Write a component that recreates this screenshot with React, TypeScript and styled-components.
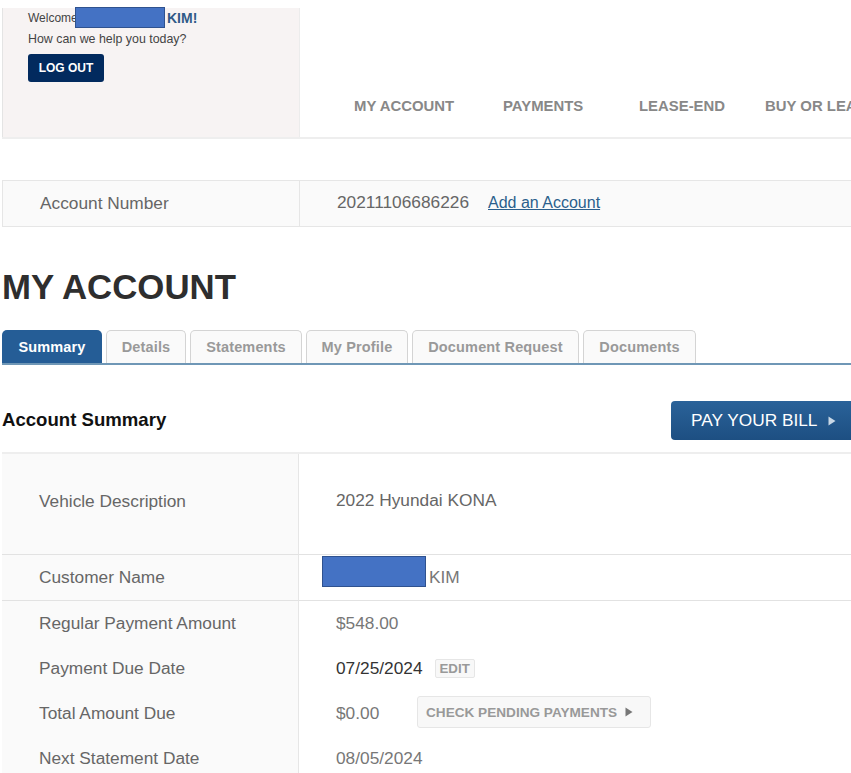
import { createGlobalStyle, styled } from 'styled-components';

const GlobalStyle = createGlobalStyle`
  html, body {
    margin: 0;
    padding: 0;
    background: #fff;
    overflow: hidden;
  }
  body {
    font-family: "Liberation Sans", Arial, sans-serif;
  }
`;

const navItems = [
  { label: 'MY ACCOUNT', width: 149 },
  { label: 'PAYMENTS', width: 136 },
  { label: 'LEASE-END', width: 126 },
  { label: 'BUY OR LEASE', width: 120 },
];

const tabs = [
  { label: 'Summary', width: 100, active: true },
  { label: 'Details', width: 80 },
  { label: 'Statements', width: 112 },
  { label: 'My Profile', width: 102 },
  { label: 'Document Request', width: 167 },
  { label: 'Documents', width: 113 },
];

const App = () => {
  return (
    <Page>
      <GlobalStyle />
      <Header>
        <WelcomePanel>
          <WelcomeLine>
            Welcome <Redaction $w={90} $h={21} $x={47} $y={-4} /> <Name>KIM!</Name>
          </WelcomeLine>
          <HelpLine>How can we help you today?</HelpLine>
          <LogOut>LOG OUT</LogOut>
        </WelcomePanel>
        <Nav>
          {navItems.map((item) => (
            <NavItem key={item.label} style={{ width: item.width }}>
              {item.label}
            </NavItem>
          ))}
        </Nav>
      </Header>

      <AccountBar>
        <AccountLabel>Account Number</AccountLabel>
        <AccountValue>
          20211106686226
          <AddLink href="#">Add an Account</AddLink>
        </AccountValue>
      </AccountBar>

      <Heading>MY ACCOUNT</Heading>

      <TabBar>
        {tabs.map((tab) => (
          <Tab key={tab.label} $active={tab.active} style={{ width: tab.width }}>
            {tab.label}
          </Tab>
        ))}
      </TabBar>

      <SummaryHead>
        <SummaryTitle>Account Summary</SummaryTitle>
        <PayButton>
          PAY YOUR BILL
          <Arrow width="8" height="10" viewBox="0 0 8 10">
            <path d="M0.5 0.5 L7.5 5 L0.5 9.5 Z" fill="#c9d8e6" />
          </Arrow>
        </PayButton>
      </SummaryHead>

      <Table>
        <LabelCell $h={101} $line>
          <VehicleLabel>Vehicle Description</VehicleLabel>
        </LabelCell>
        <ValueCell $h={101} $line>
          <VehicleText>2022 Hyundai KONA</VehicleText>
        </ValueCell>

        <LabelCell $h={46} $line>
          Customer Name
        </LabelCell>
        <ValueCell $h={46} $line>
          <Redaction $w={104} $h={31} $x={23} $y={1} />
          <CustomerText>KIM</CustomerText>
        </ValueCell>

        <LabelCell $h={45}>Regular Payment Amount</LabelCell>
        <ValueCell $h={45}>$548.00</ValueCell>

        <LabelCell $h={45}>Payment Due Date</LabelCell>
        <ValueCell $h={45}>
          <DueDate>07/25/2024</DueDate>
          <EditButton>EDIT</EditButton>
        </ValueCell>

        <LabelCell $h={45}>Total Amount Due</LabelCell>
        <ValueCell $h={45}>
          <TotalAmount>$0.00</TotalAmount>
          <PendingButton>
            CHECK PENDING PAYMENTS
            <svg width="8" height="10" viewBox="0 0 8 10">
              <path d="M0.5 0.5 L7.5 5 L0.5 9.5 Z" fill="#777" />
            </svg>
          </PendingButton>
        </ValueCell>

        <LabelCell $h={45}>Next Statement Date</LabelCell>
        <ValueCell $h={45}>08/05/2024</ValueCell>
      </Table>
    </Page>
  );
};

export default App;

const Page = styled.div`
  width: 851px;
  height: 773px;
  padding: 8px 0 0 2px;
  box-sizing: border-box;
  overflow: hidden;
`;

const Header = styled.div`
  display: flex;
  height: 131px;
  width: 849px;
  border-bottom: 2px solid #eeeeee;
  box-sizing: border-box;
`;

const WelcomePanel = styled.div`
  width: 298px;
  flex: none;
  padding: 3px 0 0 25px;
  box-sizing: border-box;
  background: #f7f3f3;
  border-left: 1px solid #e4e4e4;
  border-right: 1px solid #ececec;
`;

const WelcomeLine = styled.div`
  position: relative;
  height: 15px;
  line-height: 15px;
  font-size: 12px;
  color: #444;
  white-space: nowrap;
`;

const Redaction = styled.span<{ $w: number; $h: number; $x: number; $y: number }>`
  position: absolute;
  left: ${(p) => p.$x}px;
  top: ${(p) => p.$y}px;
  width: ${(p) => p.$w}px;
  height: ${(p) => p.$h}px;
  box-sizing: border-box;
  background: #4472c4;
  border: 1px solid #2f528f;
`;

const Name = styled.span`
  position: absolute;
  left: 139px;
  top: 0;
  font-size: 14px;
  font-weight: bold;
  color: #2f5a87;
`;

const HelpLine = styled.div`
  margin-top: 5px;
  font-size: 12.4px;
  line-height: 16px;
  color: #444;
`;

const LogOut = styled.button`
  display: block;
  margin-top: 7px;
  width: 76px;
  height: 28px;
  padding: 0;
  border: none;
  border-radius: 3px;
  background: #022a5e;
  color: #fff;
  font-family: inherit;
  font-size: 12px;
  font-weight: bold;
`;

const Nav = styled.nav`
  display: flex;
  padding: 89px 0 0 54px;
  overflow: hidden;
`;

const NavItem = styled.div`
  flex: none;
  font-size: 14.9px;
  font-weight: bold;
  line-height: 18px;
  color: #888;
  white-space: nowrap;
`;

const AccountBar = styled.div`
  display: flex;
  align-items: center;
  height: 47px;
  margin-top: 41px;
  box-sizing: border-box;
  background: #fafafa;
  border-top: 1px solid #e6e6e6;
  border-bottom: 1px solid #e6e6e6;
  border-left: 1px solid #e6e6e6;
`;

const AccountLabel = styled.div`
  width: 297px;
  height: 100%;
  flex: none;
  display: flex;
  align-items: center;
  padding-left: 37px;
  box-sizing: border-box;
  border-right: 1px solid #e6e6e6;
  font-size: 17.3px;
  color: #666;
`;

const AccountValue = styled.div`
  padding-left: 37px;
  font-size: 17.3px;
  color: #666;
  margin-top: -2px;
`;

const AddLink = styled.a`
  margin-left: 19px;
  font-size: 16px;
  color: #2b5f8c;
  text-decoration: underline;
`;

const Heading = styled.h1`
  margin: 41px 0 0;
  height: 38px;
  font-size: 34.8px;
  line-height: 38px;
  font-weight: bold;
  color: #2e2e2e;
`;

const TabBar = styled.div`
  display: flex;
  gap: 4px;
  height: 35px;
  margin-top: 24px;
  box-sizing: border-box;
  border-bottom: 2px solid #6f97b6;
`;

const Tab = styled.div<{ $active?: boolean }>`
  flex: none;
  height: 33px;
  box-sizing: border-box;
  display: flex;
  align-items: center;
  justify-content: center;
  border-radius: 5px 5px 0 0;
  border: ${(p) => (p.$active ? 'none' : '1px solid #d4d4d4')};
  border-bottom: none;
  background: ${(p) => (p.$active ? '#255d96' : '#fafafa')};
  color: ${(p) => (p.$active ? '#fff' : '#999')};
  font-size: 14.5px;
  font-weight: bold;
  letter-spacing: 0.15px;
`;

const SummaryHead = styled.div`
  display: flex;
  align-items: center;
  justify-content: space-between;
  height: 39px;
  margin-top: 36px;
`;

const SummaryTitle = styled.div`
  margin-top: -2px;
  font-size: 18.6px;
  font-weight: bold;
  color: #111;
`;

const PayButton = styled.button`
  display: flex;
  align-items: center;
  gap: 11px;
  flex: none;
  width: 192px;
  height: 39px;
  margin-right: -12px;
  padding: 0 0 0 20px;
  box-sizing: border-box;
  border: none;
  border-radius: 4px 0 0 4px;
  background: linear-gradient(#2a6299, #1d4f82);
  color: #fff;
  font-family: inherit;
  font-size: 17.3px;
`;

const Arrow = styled.svg`
  flex: none;
`;

const Table = styled.div`
  display: grid;
  grid-template-columns: 297px 1fr;
  margin-top: 12px;
  border-top: 2px solid #eeeeee;
`;

const LabelCell = styled.div<{ $h: number; $line?: boolean }>`
  height: ${(p) => p.$h}px;
  box-sizing: border-box;
  display: flex;
  align-items: center;
  padding-left: 37px;
  background: #fafafa;
  border-right: 1px solid #e6e6e6;
  border-bottom: ${(p) => (p.$line ? '1px solid #e2e2e2' : 'none')};
  font-size: 17.3px;
  color: #666;
`;

const ValueCell = styled.div<{ $h: number; $line?: boolean }>`
  position: relative;
  height: ${(p) => p.$h}px;
  box-sizing: border-box;
  display: flex;
  align-items: center;
  padding-left: 37px;
  border-bottom: ${(p) => (p.$line ? '1px solid #e2e2e2' : 'none')};
  font-size: 17.3px;
  color: #777;
`;

const VehicleLabel = styled.span`
  margin-top: -6px;
`;

const VehicleText = styled.span`
  margin-top: -8px;
  color: #666;
`;

const CustomerText = styled.span`
  margin-left: 93px;
`;

const DueDate = styled.span`
  color: #333;
`;

const EditButton = styled.span`
  margin-left: 12px;
  padding: 0 4px;
  height: 19px;
  line-height: 18px;
  box-sizing: border-box;
  border: 1px solid #e6e6e6;
  border-radius: 2px;
  background: #f8f8f8;
  font-size: 13.3px;
  font-weight: bold;
  color: #999;
`;

const TotalAmount = styled.span`
  width: 81px;
  flex: none;
`;

const PendingButton = styled.span`
  display: flex;
  align-items: center;
  gap: 8px;
  height: 32px;
  width: 234px;
  padding-left: 8px;
  box-sizing: border-box;
  border: 1px solid #e6e6e6;
  border-radius: 3px;
  background: #f8f8f8;
  font-size: 13.6px;
  font-weight: bold;
  color: #999;
  margin-top: -3px;
`;
